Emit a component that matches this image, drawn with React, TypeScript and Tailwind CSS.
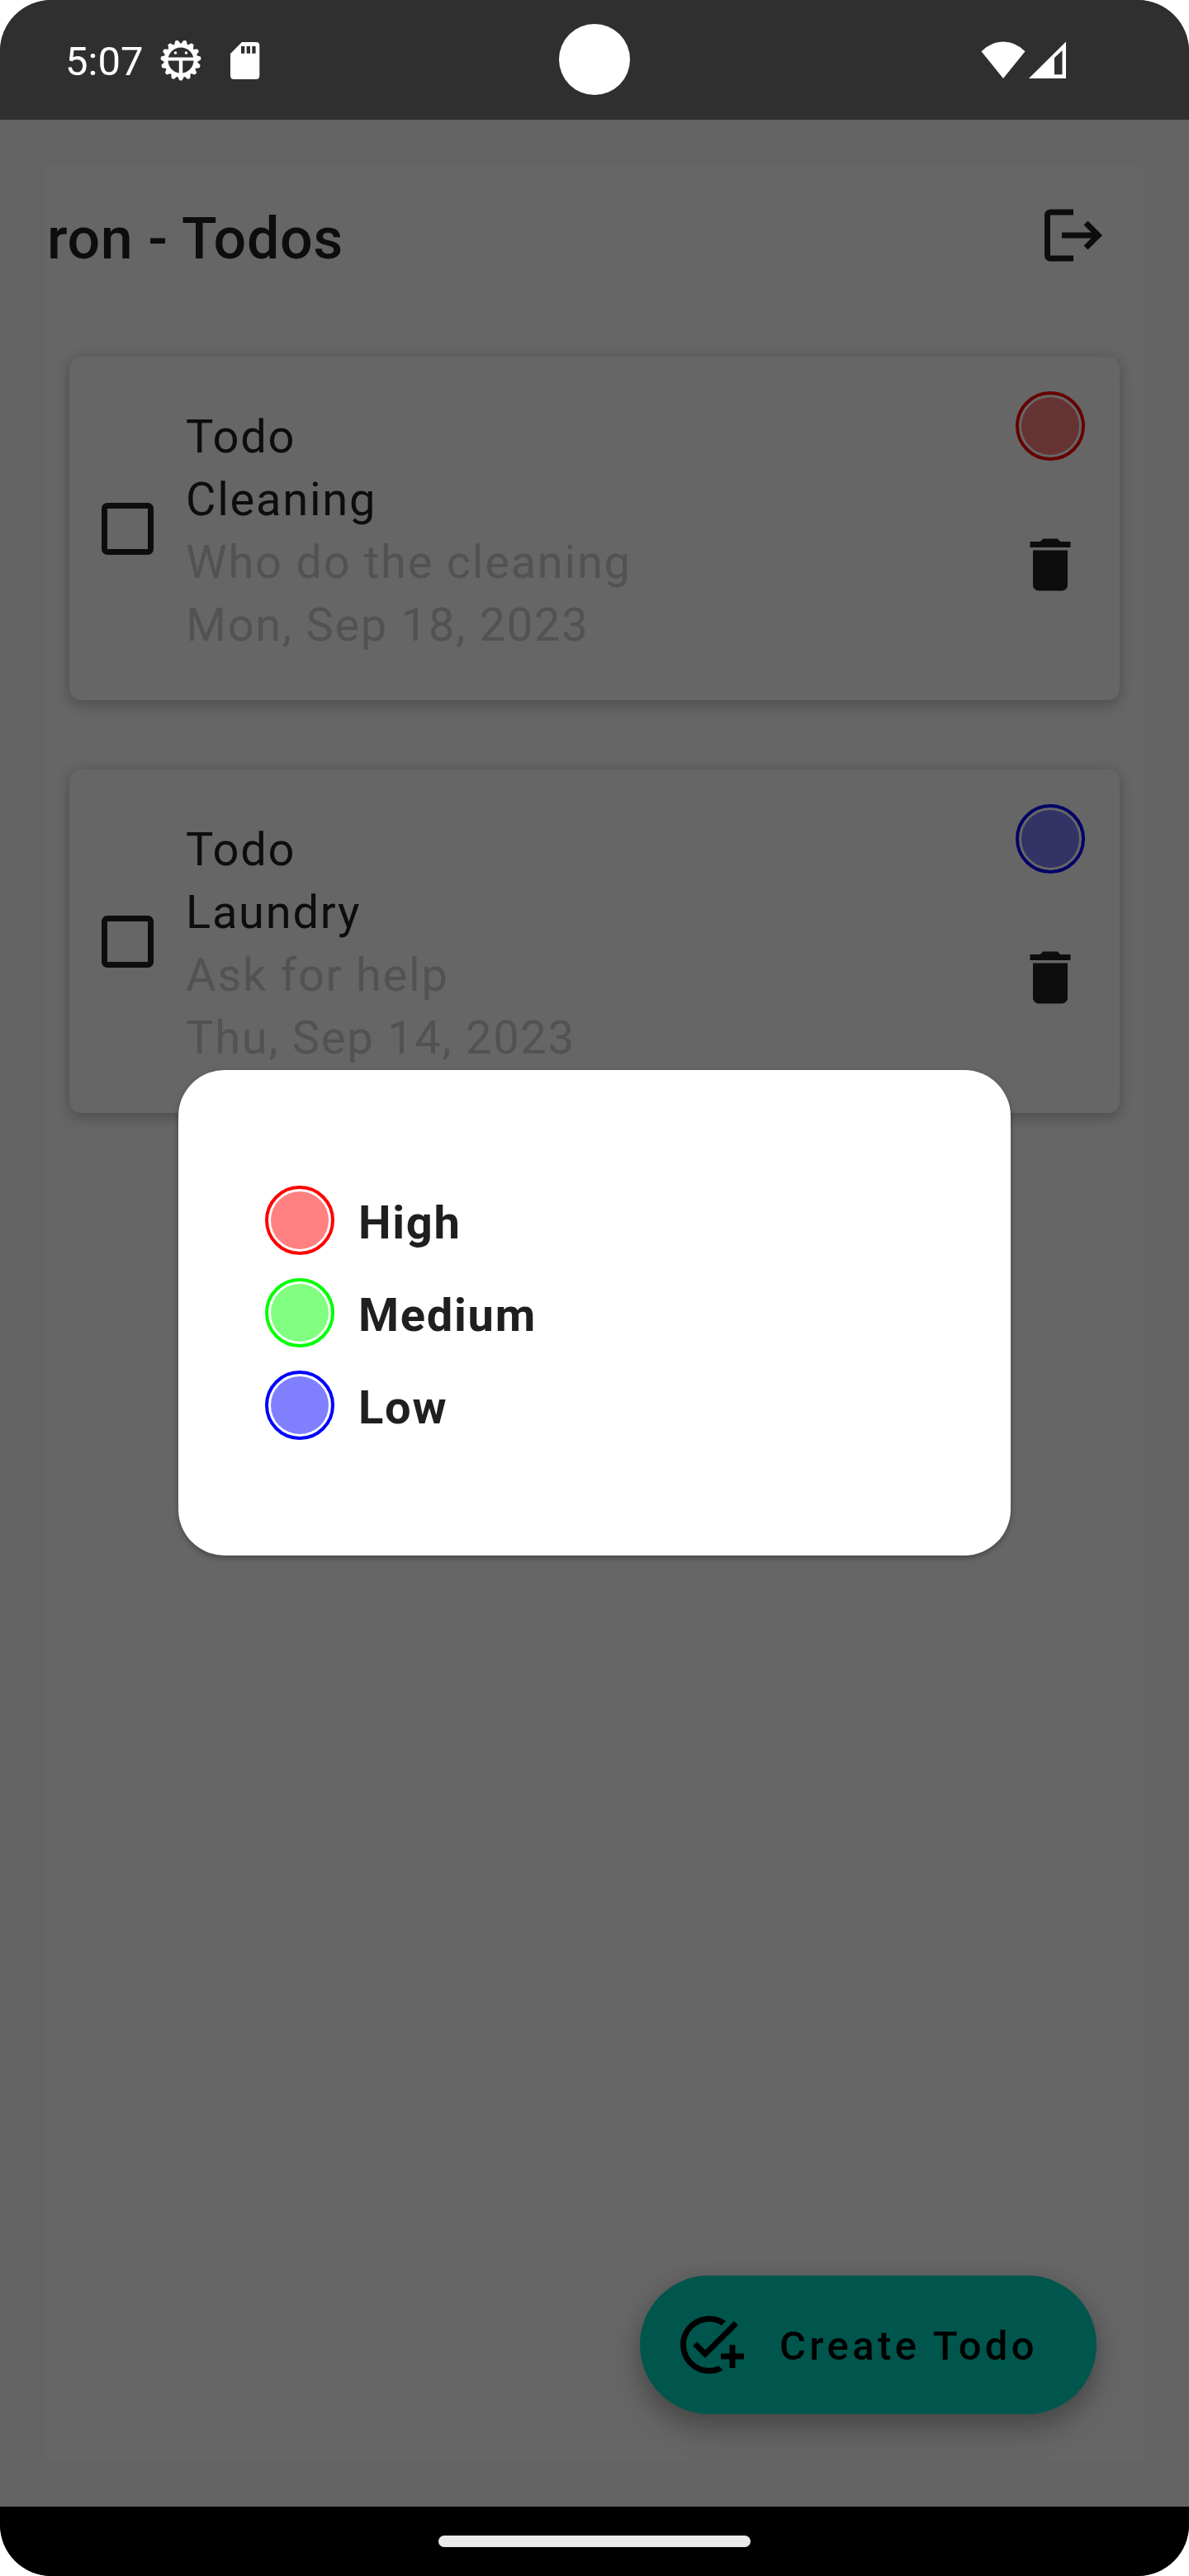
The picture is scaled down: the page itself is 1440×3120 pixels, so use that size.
import React from "react";
import { MdLogout, MdDelete, MdOutlineAddTask } from "react-icons/md";

const TEETH = Array.from({ length: 15 }, (_, i) => i * 24 + 12);

function DebugIcon() {
  return (
    <svg className="h-[50px] w-[50px]" viewBox="-25 -25 50 50" fill="none" stroke="#fff">
      <circle r="17.9" strokeWidth="4.8" />
      {TEETH.map((a) => (
        <path
          key={a}
          d="M-3.2 -19L-1 -23.4H1L3.2 -19Z"
          fill="#fff"
          strokeWidth="2"
          strokeLinejoin="round"
          transform={`rotate(${a})`}
        />
      ))}
      <path d="M-17 -1.5H17" strokeWidth="4" />
      <path d="M0 0V20" strokeWidth="4.4" />
      <circle cx="-6.5" cy="-9" r="1.8" fill="#fff" stroke="none" />
      <circle cx="6.5" cy="-9" r="1.8" fill="#fff" stroke="none" />
    </svg>
  );
}

function SdCardIcon() {
  return (
    <svg className="ml-[35px] mt-[2px] h-[45px] w-[36px]" viewBox="0 0 36 45">
      <path
        fill="#fff"
        fillRule="evenodd"
        d="M14 0H31Q35.3 0 35.3 4V40.5Q35.3 45 31 45H4.5Q0 45 0 40.5V14ZM13 5V13.7H17.3V5ZM19.7 5V13.7H24V5ZM26.3 5V13.7H30.6V5Z"
      />
    </svg>
  );
}

function StatusBar() {
  return (
    <header className="relative flex h-[145px] shrink-0 items-center justify-between bg-[#2f2f2f] pl-[79px] pr-[149px] text-white">
      <div className="flex items-center">
        <span className="mr-[21px] mt-[4px] text-[49px] leading-none">5:07</span>
        <DebugIcon />
        <SdCardIcon />
      </div>
      <div className="absolute left-[677px] top-[29px] h-[86px] w-[86px] rounded-full bg-white" />
      <div className="flex items-center gap-[4px]">
        <svg className="h-[45px] w-[54px]" viewBox="0 0 54 45">
          <path fill="#fff" d="M27 45L0.5 12.3Q12 0.5 27 0.5T53.5 12.3Z" />
        </svg>
        <svg className="h-[45px] w-[45px]" viewBox="0 0 45 45">
          <path fill="#fff" fillRule="evenodd" d="M0 45L45 0.5V45ZM31 20V40.2H40.5V11Z" />
        </svg>
      </div>
    </header>
  );
}

function Priority({ ring, fill }: { ring: string; fill: string }) {
  return (
    <div className={`h-[84px] w-[84px] shrink-0 rounded-full border-[4px] p-[3px] ${ring}`}>
      <div className={`h-full w-full rounded-full ${fill}`} />
    </div>
  );
}

type Todo = { title: string; note: string; date: string; ring: string; fill: string };

const todos: Todo[] = [
  { title: "Cleaning", note: "Who do the cleaning", date: "Mon, Sep 18, 2023", ring: "border-[#660000]", fill: "bg-[#663333]" },
  { title: "Laundry", note: "Ask for help", date: "Thu, Sep 14, 2023", ring: "border-[#000066]", fill: "bg-[#333366]" },
];

const levels = [
  { name: "High", ring: "border-[#ff0000]", fill: "bg-[#ff8080]" },
  { name: "Medium", ring: "border-[#00ff00]", fill: "bg-[#80ff80]" },
  { name: "Low", ring: "border-[#0000ff]", fill: "bg-[#8080ff]" },
];

function TodoCard({ todo }: { todo: Todo }) {
  return (
    <article className="flex h-[416px] rounded-[14px] bg-[#666] pl-[38.5px] pr-[42px] shadow-[0_7px_16px_rgba(0,0,0,0.17),0_0_16px_rgba(0,0,0,0.1)]">
      <div className="h-[63px] w-[63px] shrink-0 self-center rounded-[7px] border-[7px] border-[#0d0d0d]" />
      <div className="ml-[39.5px] grow pt-[58.5px] text-[56px] leading-[76px] tracking-[1.75px] text-[#0d0d0d]">
        <p>Todo</p>
        <p>{todo.title}</p>
        <p className="text-[#525252]">{todo.note}</p>
        <p className="text-[#525252]">{todo.date}</p>
      </div>
      <div className="flex flex-col gap-[84px] pt-[42px]">
        <Priority ring={todo.ring} fill={todo.fill} />
        <MdDelete className="h-[84px] w-[84px] text-[#0d0d0d]" />
      </div>
    </article>
  );
}

export default function App() {
  return (
    <div className="bg-white">
      <div className="relative flex h-[3120px] w-[1440px] flex-col overflow-hidden rounded-[62px] bg-[#646464] font-[Roboto,sans-serif]">
        <StatusBar />
        <main className="grow p-[56px]">
          <div className="flex h-full flex-col bg-[#666]">
            <div className="flex h-[132px] items-start justify-between pl-[1px] pr-[42px] pt-[41.5px]">
              <h1 className="pt-[4.5px] text-[70px] font-medium leading-[84px] tracking-[0.6px] text-[#0d0d0d]">ron - Todos</h1>
              <MdLogout className="h-[84px] w-[84px] text-[#0d0d0d]" />
            </div>
            <section className="mt-[99px] flex flex-col gap-[84px] px-[28px]">
              {todos.map((t) => (
                <TodoCard key={t.title} todo={t} />
              ))}
            </section>
            <button className="mb-[56px] mr-[56px] mt-auto flex h-[168px] w-[553px] items-center self-end rounded-full bg-[#00564d] pl-[42px] shadow-[0_20px_34px_rgba(0,0,0,0.25),0_0_24px_rgba(0,0,0,0.1)]">
              <MdOutlineAddTask className="h-[84px] w-[84px] text-black" />
              <span className="ml-[43px] pt-[2px] text-[49px] font-medium leading-none tracking-[4.375px] text-black">Create Todo</span>
            </button>
          </div>
        </main>
        <footer className="flex h-[84px] shrink-0 items-center justify-center bg-black">
          <div className="h-[14px] w-[378px] rounded-full bg-[#ebebeb]" />
        </footer>
        <div
          role="dialog"
          className="absolute left-[216px] top-[1296px] flex h-[588px] w-[1008px] flex-col gap-[28px] rounded-[56px] bg-white px-[105px] pt-[140px] shadow-[0_3px_7px_rgba(0,0,0,0.3)]"
        >
          {levels.map((l) => (
            <div key={l.name} className="flex h-[84px] items-center">
              <Priority ring={l.ring} fill={l.fill} />
              <span className="ml-[29px] pt-[6px] text-[56px] font-bold leading-[76px] tracking-[1.75px] text-[#1f1f1f]">{l.name}</span>
            </div>
          ))}
        </div>
      </div>
    </div>
  );
}
